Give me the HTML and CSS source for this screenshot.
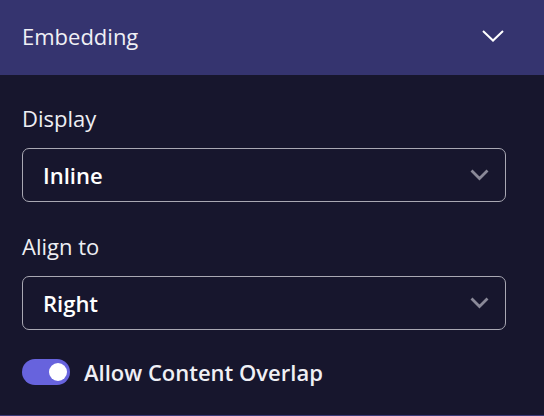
FILE: index.html
```html
<!DOCTYPE html>
<html>
<head>
<meta charset="utf-8">
<link rel="stylesheet" href="styles.css">
</head>
<body>
<div class="panel">
  <div class="header">
    <span class="title">Embedding</span>
    <svg class="hchev" width="22" height="12" viewBox="0 0 22 12"><path d="M1 1 L11 10.5 L21 1" fill="none" stroke="#ffffff" stroke-width="2"/></svg>
  </div>
  <div class="content">
    <div class="field">
      <div class="label">Display</div>
      <div class="select"><span>Inline</span>
        <svg class="schev" width="19" height="12" viewBox="0 0 19 12"><path d="M1.5 1.5 L9.5 9.5 L17.5 1.5" fill="none" stroke="#8a8998" stroke-width="2.8"/></svg>
      </div>
    </div>
    <div class="field">
      <div class="label">Align to</div>
      <div class="select"><span>Right</span>
        <svg class="schev" width="19" height="12" viewBox="0 0 19 12"><path d="M1.5 1.5 L9.5 9.5 L17.5 1.5" fill="none" stroke="#8a8998" stroke-width="2.8"/></svg>
      </div>
    </div>
    <div class="toggle-row">
      <div class="toggle"><div class="knob"></div></div>
      <span class="tlabel">Allow Content Overlap</span>
    </div>
  </div>
</div>
</body>
</html>
```
FILE: styles.css
```css
html, body {
  margin: 0;
  padding: 0;
  background: #17162d;
  width: 544px;
  height: 416px;
  overflow: hidden;
  font-family: "Open Sans", "Noto Sans", sans-serif;
  color: #ffffff;
}
.panel {
  height: 416px;
  box-sizing: border-box;
  border-bottom: 1px solid #3b3a78;
}
.header {
  height: 75px;
  background: #35346f;
  display: flex;
  align-items: center;
  justify-content: space-between;
  padding: 0 40px 0 22px;
  box-sizing: border-box;
}
.title {
  font-size: 22px;
  line-height: 30px;
  color: #f0f0f5;
  position: relative;
  top: -2px;
}
.hchev {
  display: block;
  margin-top: -4px;
}
.content {
  padding: 28px 38px 0 22px;
}
.label {
  font-size: 22px;
  line-height: 30px;
  color: #eeeef3;
  margin-bottom: 15px;
}
.field {
  margin-bottom: 29px;
}
.select {
  height: 54px;
  box-sizing: border-box;
  border: 1px solid #a9a8b3;
  border-radius: 7px;
  display: flex;
  align-items: center;
  justify-content: space-between;
  padding: 0 16px 0 20px;
  font-size: 22px;
  font-weight: 600;
}
.schev {
  display: block;
  margin-top: -1px;
}
.toggle-row {
  display: flex;
  align-items: center;
  gap: 14px;
  margin-top: 1px;
}
.toggle {
  width: 48px;
  height: 26px;
  border-radius: 13px;
  background: #6763dd;
  display: flex;
  align-items: center;
  justify-content: flex-end;
  padding-right: 3px;
  box-sizing: border-box;
}
.knob {
  width: 18px;
  height: 18px;
  border-radius: 50%;
  background: #ffffff;
}
.tlabel {
  font-size: 22px;
  line-height: 26px;
  font-weight: 600;
  color: #f0f0f5;
}
```
